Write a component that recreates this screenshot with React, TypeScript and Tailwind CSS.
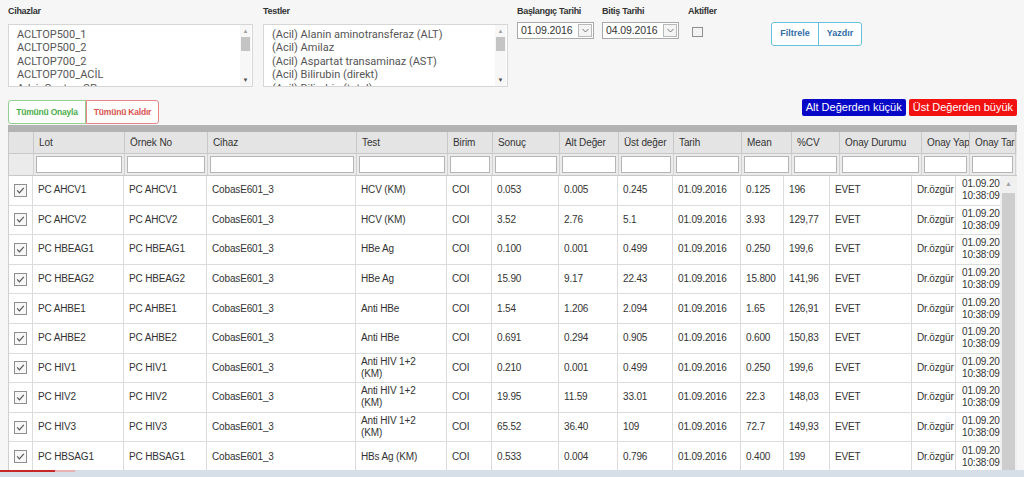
import React from 'react';

const cihazlar = ['ACLTOP500_1', 'ACLTOP500_2', 'ACLTOP700_2', 'ACLTOP700_ACİL', 'AdviaCentaurCP'];
const testler = [
  '(Acil) Alanin aminotransferaz (ALT)',
  '(Acil) Amilaz',
  '(Acil) Aspartat transaminaz (AST)',
  '(Acil) Bilirubin (direkt)',
  '(Acil) Bilirubin (total)',
];

const headers = ['Lot', 'Örnek No', 'Cihaz', 'Test', 'Birim', 'Sonuç', 'Alt Değer', 'Üst değer', 'Tarih', 'Mean', '%CV', 'Onay Durumu', 'Onay Yapan', 'Onay Tarihi'];

// lot, test, sonuc, alt, ust, mean, cv
const rows: [string, string, string, string, string, string, string][] = [
  ['PC AHCV1', 'HCV (KM)', '0.053', '0.005', '0.245', '0.125', '196'],
  ['PC AHCV2', 'HCV (KM)', '3.52', '2.76', '5.1', '3.93', '129,77'],
  ['PC HBEAG1', 'HBe Ag', '0.100', '0.001', '0.499', '0.250', '199,6'],
  ['PC HBEAG2', 'HBe Ag', '15.90', '9.17', '22.43', '15.800', '141,96'],
  ['PC AHBE1', 'Anti HBe', '1.54', '1.206', '2.094', '1.65', '126,91'],
  ['PC AHBE2', 'Anti HBe', '0.691', '0.294', '0.905', '0.600', '150,83'],
  ['PC HIV1', 'Anti HIV 1+2 (KM)', '0.210', '0.001', '0.499', '0.250', '199,6'],
  ['PC HIV2', 'Anti HIV 1+2 (KM)', '19.95', '11.59', '33.01', '22.3', '148,03'],
  ['PC HIV3', 'Anti HIV 1+2 (KM)', '65.52', '36.40', '109', '72.7', '149,93'],
  ['PC HBSAG1', 'HBs Ag (KM)', '0.533', '0.004', '0.796', '0.400', '199'],
];

function ListBox({ items }: { items: string[] }) {
  return (
    <div className="h-[63px] border border-[#d6d6d6] bg-white flex overflow-hidden">
      <div className="flex-1 pl-[8px] pt-[3px] font-['Roboto',sans-serif] text-[11px] leading-[13.4px] text-[#555] overflow-hidden whitespace-nowrap">
        {items.map((t) => (
          <div key={t}>{t}</div>
        ))}
      </div>
      <div className="w-[11px] mr-[1px] flex flex-col items-center bg-[#f7f7f7]">
        <div className="h-[12px] flex items-center justify-center text-[6px] text-[#a0a0a0]">▲</div>
        <div className="w-[9px] h-[14px] bg-[#c4c4c4]" />
        <div className="flex-1" />
        <div className="h-[12px] flex items-center justify-center text-[6px] text-[#505050]">▼</div>
      </div>
    </div>
  );
}

function DateBox({ value }: { value: string }) {
  return (
    <div className="w-[77px] h-[17px] border border-[#a9a9a9] bg-white flex items-center">
      <span className="pl-[3px] text-[10.5px] tracking-[-0.1px] text-[#333] leading-none whitespace-nowrap">{value}</span>
      <div className="ml-auto mr-[1px] w-[14px] h-[13px] shrink-0 border border-[#b9b9b9] bg-[#f4f4f4] flex items-center justify-center">
        <svg width="7" height="5" viewBox="0 0 7 5">
          <path d="M0.5 1 L3.5 4 L6.5 1" fill="none" stroke="#777" strokeWidth="1" />
        </svg>
      </div>
    </div>
  );
}

function Check() {
  return (
    <svg width="13" height="13" viewBox="0 0 13 13">
      <rect x="0.5" y="0.5" width="12" height="12" fill="#f7f7f7" stroke="#8f8f8f" />
      <path d="M3.2 6.4 L5.4 8.8 L9.8 3.8" fill="none" stroke="#555" strokeWidth="1.2" />
    </svg>
  );
}

export default function App() {
  return (
    <div className="w-[1024px] h-[477px] overflow-hidden bg-[#f6f6f6] font-['Liberation_Sans',sans-serif] text-[#333]">
      {/* Filters */}
      <div className="h-[98px] flex pl-[8px] pt-[5px]">
        <div className="w-[245px]">
          <div className="h-[12px] text-[9px] font-bold tracking-[-0.3px] leading-[12px]">Cihazlar</div>
          <div className="mt-[7px]">
            <ListBox items={cihazlar} />
          </div>
        </div>
        <div className="w-[245px] ml-[10px]">
          <div className="h-[12px] text-[9px] font-bold tracking-[-0.3px] leading-[12px]">Testler</div>
          <div className="mt-[7px]">
            <ListBox items={testler} />
          </div>
        </div>
        <div className="w-[77px] ml-[9px]">
          <div className="h-[12px] text-[9px] font-bold tracking-[-0.3px] leading-[12px] whitespace-nowrap">Başlangıç Tarihi</div>
          <div className="mt-[5px]">
            <DateBox value="01.09.2016" />
          </div>
        </div>
        <div className="w-[77px] ml-[8px]">
          <div className="h-[12px] text-[9px] font-bold tracking-[-0.3px] leading-[12px] whitespace-nowrap">Bitiş Tarihi</div>
          <div className="mt-[5px]">
            <DateBox value="04.09.2016" />
          </div>
        </div>
        <div className="w-[83px] ml-[9px]">
          <div className="h-[12px] text-[9px] font-bold tracking-[-0.3px] leading-[12px]">Aktifler</div>
          <div className="mt-[10px] ml-[4px] w-[11px] h-[10px] border border-[#8f8f8f] bg-[#f3f3f3]" />
        </div>
        <div className="mt-[17px]">
          <div className="flex h-[24px] border border-[#66c2dc] rounded-[3px] bg-white text-[9px] font-bold text-[#2f6ea8]">
            <div className="w-[47px] flex items-center justify-center border-r border-[#66c2dc]">Filtrele</div>
            <div className="w-[42px] flex items-center justify-center">Yazdır</div>
          </div>
        </div>
      </div>

      {/* Action row */}
      <div className="h-[27px] flex justify-between pl-[8px] pr-[7px]">
        <div className="flex h-[24px] mt-[2px] text-[8.5px] font-bold tracking-[-0.2px]">
          <div className="w-[78px] flex items-center justify-center border border-[#93cf8f] rounded-l-[3px] bg-white text-[#4cae4c]">Tümünü Onayla</div>
          <div className="w-[73px] flex items-center justify-center border border-[#e58585] rounded-r-[3px] bg-white text-[#d9534f]">Tümünü Kaldır</div>
        </div>
        <div className="flex gap-[3px] mt-[1px] h-[17px] text-[11px] text-white">
          <div className="px-[4px] flex items-center bg-[#0707c8] rounded-[2px]">Alt Değerden küçük</div>
          <div className="px-[4px] flex items-center bg-[#f21111] rounded-[2px]">Üst Değerden büyük</div>
        </div>
      </div>

      {/* Table */}
      <div className="ml-[8px] w-[1009px]">
        <div className="h-[7px] bg-[#b3b3b3]" />
        <div className="grid grid-cols-[25px_91px_83px_149px_91px_45px_67px_59px_55px_68px_50px_48px_82px_48px_46px] h-[22px] bg-[#e4e4e4] border-l border-[#c8c8c8] text-[10px] tracking-[-0.1px] text-[#333]">
          <div className="border-r border-b border-[#c8c8c8]" />
          {headers.map((h) => (
            <div key={h} className="px-[5px] flex items-center border-r border-b border-[#c8c8c8] whitespace-nowrap overflow-hidden">
              {h}
            </div>
          ))}
        </div>
        <div className="grid grid-cols-[25px_91px_83px_149px_91px_45px_67px_59px_55px_68px_50px_48px_82px_48px_46px] h-[21px] bg-[#ebebeb] border-l border-[#c8c8c8]">
          <div className="border-r border-[#d2d2d2]" />
          {headers.map((h) => (
            <div key={h} className="flex items-center px-[2px] border-r border-[#d2d2d2]">
              <div className="w-full h-[17px] bg-white border border-[#b5b5b5]" />
            </div>
          ))}
        </div>
        <div className="flex h-[295px] overflow-hidden bg-white border-l border-[#d0d0d0] border-t border-t-[#c8c8c8]">
          <div className="w-[991px]">
            {rows.map((r) => (
              <div
                key={r[0]}
                className="grid grid-cols-[24px_91px_83px_149px_91px_45px_67px_59px_55px_68px_43px_46px_82px_44px_44px] h-[29.6px] text-[10px] tracking-[-0.15px] leading-[12px] text-[#333]"
              >
                <div className="flex items-center justify-center border-r border-b border-[#dcdcdc]">
                  <Check />
                </div>
                {[r[0], r[0], 'CobasE601_3'].map((c, i) => (
                  <div key={i} className="px-[5px] flex items-center border-r border-b border-[#dcdcdc] overflow-hidden">
                    {c}
                  </div>
                ))}
                <div className="px-[5px] flex items-center border-r border-b border-[#dcdcdc] overflow-hidden">
                  <span className="max-w-[70px]">{r[1]}</span>
                </div>
                {['COI', r[2], r[3], r[4], '01.09.2016', r[5], r[6], 'EVET'].map((c, i) => (
                  <div key={i} className="px-[5px] flex items-center border-r border-b border-[#dcdcdc] overflow-hidden">
                    {c}
                  </div>
                ))}
                <div className="pl-[5px] flex items-center border-r border-b border-[#dcdcdc] overflow-hidden whitespace-nowrap">Dr.özgür</div>
                <div className="pl-[6px] flex flex-col justify-center border-b border-[#dcdcdc] overflow-hidden whitespace-nowrap">
                  <span>01.09.2016</span>
                  <span>10:38:09</span>
                </div>
              </div>
            ))}
          </div>
          <div className="w-[17px] bg-[#f0f0f0] flex flex-col items-center">
            <div className="h-[17px] flex items-center justify-center text-[7px] text-[#a3a3a3]">▲</div>
            <div className="w-[13px] flex-1 bg-[#cdcdcd]" />
          </div>
        </div>
      </div>

      {/* bottom strip */}
      <div className="h-[7px] bg-[#d6dee8] flex">
        <div className="w-[55px] h-[2px] bg-[#c62828]" />
        <div className="w-[20px] h-[2px] bg-[#e9b1b1]" />
      </div>
    </div>
  );
}
